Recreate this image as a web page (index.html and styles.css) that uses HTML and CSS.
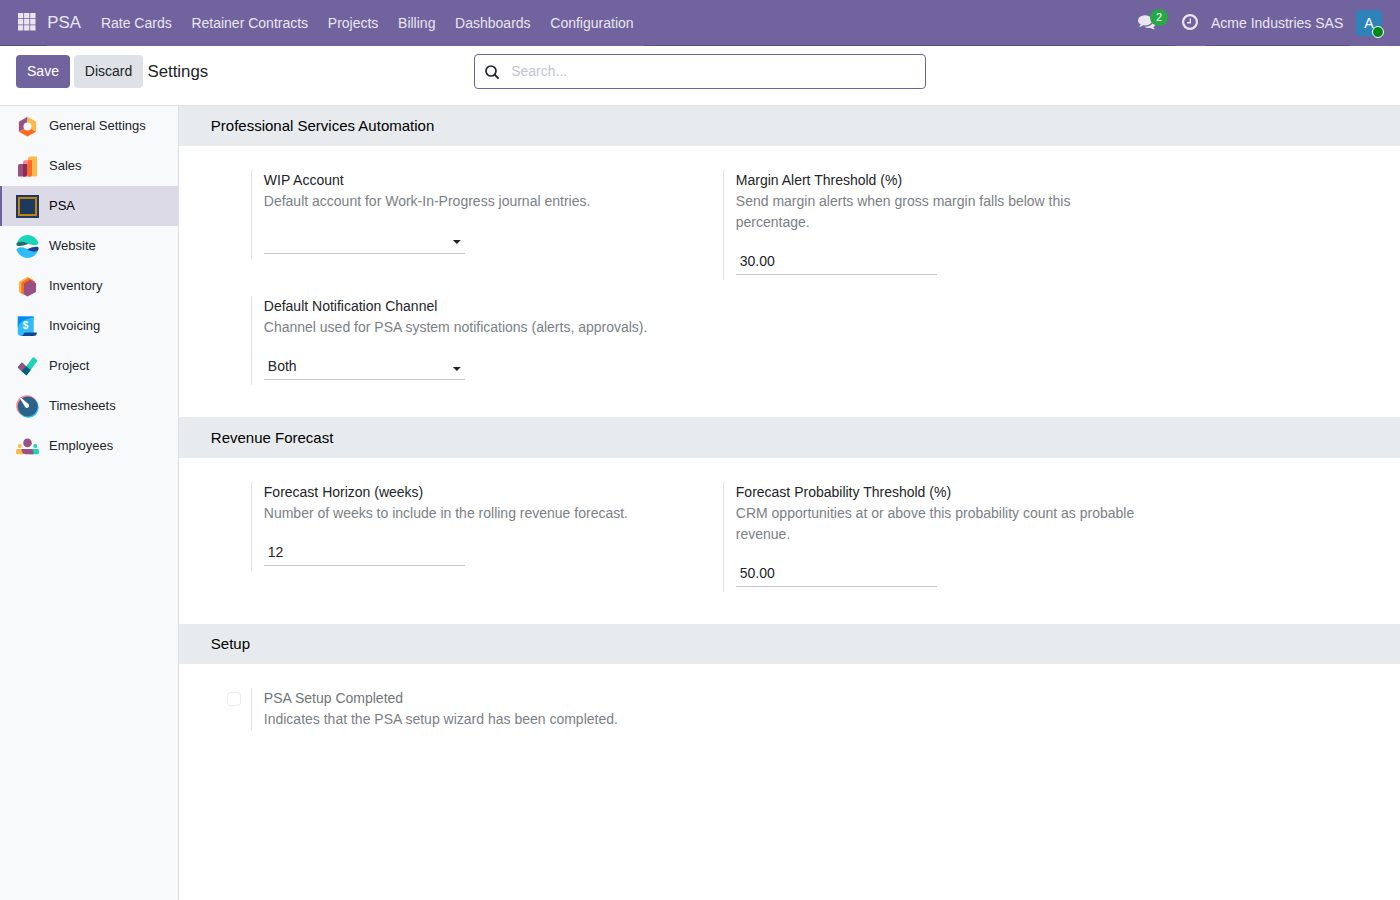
FILE: index.html
```html
<!DOCTYPE html>
<html lang="en">
<head>
<meta charset="utf-8">
<title>Settings</title>
<link rel="stylesheet" href="styles.css">
</head>
<body>
<nav class="navbar">
  <svg class="apps" width="18" height="18" viewBox="0 0 18 18" fill="#e9e6f0"><path d="M0 0h5.300v5.300H0zM6.100 0h5.300v5.300H6.100zM12.200 0h5.300v5.300h-5.300zM0 6.100h5.300v5.300H0zM6.100 6.100h5.300v5.300H6.100zM12.200 6.100h5.300v5.300h-5.300zM0 12.200h5.300v5.300H0zM6.100 12.200h5.300v5.300H6.100zM12.200 12.200h5.300v5.300h-5.300z"/></svg>
  <div class="menu">
    <span class="brand">PSA</span>
    <span>Rate Cards</span><span>Retainer Contracts</span><span>Projects</span><span>Billing</span><span>Dashboards</span><span>Configuration</span>
  </div>
  <div class="chat">
    <svg width="18" height="16" viewBox="0 0 1792 1600" fill="#e9e6f0"><path d="M1408 640q0 139-94 257t-256.500 186.500-353.500 68.500q-86 0-176-16-124 88-278 128-36 9-86 16h-3q-11 0-20.500-8t-11.500-21q-1-3-1-6.500t.5-6.500 2-6l2.500-5 3.500-5.500 4-5 4.500-5 4-4.500q5-6 23-25t26-29.500 22.500-29 25-38.500 20.500-44q-124-72-195-177t-71-224q0-139 94-257t256.500-186.500 353.500-68.500 353.500 68.500 256.500 186.500 94 257zm384 256q0 120-71 224.500t-195 176.500q10 24 20.500 44t25 38.500 22.500 29 26 29.500 23 25q1 1 4 4.500t4.500 5 4 5 3.500 5.500l2.500 5 2 6 .5 6.500-1 6.500q-3 14-13 22t-22 7q-50-7-86-16-154-40-278-128-90 16-176 16-271 0-472-132 58 4 88 4 161 0 309-45t264-129q125-92 192-212t67-254q0-77-23-152 129 71 204 178t75 230z"/></svg>
    <span class="badge">2</span>
  </div>
  <div class="clock">
    <svg width="16" height="16" viewBox="0 0 16 16" fill="none" stroke="#e9e6f0"><circle cx="8" cy="8" r="6.900" stroke-width="2.200"/><path d="M8.300 4.500v4.300H5" stroke-width="1.400"/></svg>
  </div>
  <span class="company">Acme Industries SAS</span>
  <div class="user"><div class="avatar">A<i class="status"></i></div></div>
</nav>
<header class="control">
  <button class="btn save">Save</button>
  <button class="btn discard">Discard</button>
  <span class="title">Settings</span>
  <div class="search">
    <svg width="15" height="15" viewBox="0 0 15 15" fill="none" stroke="#212529"><circle cx="6" cy="6" r="5" stroke-width="1.700"/><path d="M9.600 9.600l4 4" stroke-width="2"/></svg>
    <input type="text" placeholder="Search...">
  </div>
</header>
<div class="body">
  <aside class="sidebar">
    <div class="tab"><svg viewBox="0 0 23 23"><path d="M11.500 1.700L2.900 6.700v10l8.600-5z" fill="#985184"/><path d="M11.500 1.700l8.600 5v10l-8.600-5z" fill="#fbb945"/><path d="M2.900 16.700l8.600-5 8.600 5-8.600 4.900z" fill="#fc6b26"/><circle cx="11.500" cy="11.600" r="4" fill="#f8f9fb"/></svg><span>General Settings</span></div>
    <div class="tab"><svg viewBox="0 0 23 23"><path d="M12 3.500a2 2 0 0 1 2-2h7v19a1 1 0 0 1-1 1h-8z" fill="#fbb945"/><path d="M7 7a2 2 0 0 1 2-1.800h7v14.300a2 2 0 0 1-2 2H7z" fill="#fc868b"/><path d="M12 5.200h4v14.300a2 2 0 0 1-2 2h-2z" fill="#fc6b26"/><path d="M2 10.500A1.500 1.500 0 0 1 3.500 9h7.700v10.500a2 2 0 0 1-2 2H2z" fill="#985184"/><path d="M7 9h4.200v10.500a2 2 0 0 1-2 2H7z" fill="#962b48"/></svg><span>Sales</span></div>
    <div class="tab active"><svg viewBox="0 0 23 23"><path d="M0 0h23v23H0z" fill="#1c3a5f"/><path d="M3 3h17v17H3z" fill="none" stroke="#ba7b13" stroke-width="2"/><path d="M2.700 2.700h17.600v17.600H2.700z" fill="none" stroke="#d58b0c" stroke-width=".6"/></svg><span>PSA</span></div>
    <div class="tab"><svg viewBox="0 0 23 23"><path d="M1 7.500C3 3 6.800 0 11.500 0S21 3.500 22.500 8c-1 2.800-5 2.800-8 1.500C10 7.500 5 5 1 7.500z" fill="#1ad3bb"/><path d="M.3 9.500C.5 6 6 5.200 12.500 8.500 9 10.500 1 12.500.3 9.500z" fill="#1a6f66"/><path d="M.4 14.500c2-3 6-2.700 9.500-1 4.500 2.200 8.600 3.900 12.100 2.500-2 4-5.900 7-10.500 7S2 19.500.4 14.500z" fill="#2ebcfa"/><path d="M11 14.500c3.500-2 11.500-4 11.700-1.500.3 4-5 5-11.700 1.500z" fill="#144496"/></svg><span>Website</span></div>
    <div class="tab"><svg viewBox="0 0 23 23"><path d="M11.500 1.700l6 3.300-10 15-4.600-3V6.700z" fill="#fbb945"/><path d="M12.500 3l6.500 3.600-7 14.400L5.300 18V7.600z" fill="#fc6b26"/><path d="M14.200 5l5.800 3.300v8.800l-8.400 4.500L8 19.500V8.800z" fill="#985184"/><path d="M14.200 5L8 8.800v2.700l8.500-5.200z" fill="#b14a60"/></svg><span>Inventory</span></div>
    <div class="tab"><svg viewBox="0 0 23 23"><path d="M1.800 1.500h15.900v19.300H5a3 3 0 0 1-3.200-3z" fill="#2ebcfa"/><path d="M1.800 1.500h15.900v1.300C9 3.100 3.500 7 1.800 13z" fill="#0788f6"/><path d="M9.500 17.500h11.400c0 2.400-1.500 3.500-3.400 3.500H4.300c3.500 0 3.300-3.500 5.200-3.500z" fill="#144496"/><text x="9.500" y="14.400" class="coin">$</text></svg><span>Invoicing</span></div>
    <div class="tab"><svg viewBox="0 0 23 23"><path d="M5.300 8a1 1 0 0 1 1.400 0l3.600 3.300 6.200-8.500a1.200 1.200 0 0 1 1.700-.2l2.600 2.200a1.200 1.200 0 0 1 .2 1.700L10.500 20.500 2.200 13a1 1 0 0 1 0-1.500z" fill="#1ad3bb"/><path d="M6.700 8l3.900 3.700-4.500 5L2.200 13a1 1 0 0 1 0-1.500L5.200 8a1 1 0 0 1 1.500 0z" fill="#985184"/><path d="M10.300 11.300l4.400 3.700-4.200 5.500-4.900-4.300z" fill="#005e7a"/></svg><span>Project</span></div>
    <div class="tab"><svg viewBox="0 0 23 23"><circle cx="10.900" cy="10.900" r="10.700" fill="#fc868b"/><circle cx="12.400" cy="12.400" r="10.400" fill="#2ebcfa"/><circle cx="11.700" cy="11.500" r="10" fill="#2d6388"/><path d="M4.500 3.300l7.500 6.200a1.600 1.600 0 0 1-2.300 2.300z" fill="#fff" stroke="#fff" stroke-width="1.200" stroke-linejoin="round"/></svg><span>Timesheets</span></div>
    <div class="tab"><svg viewBox="0 0 23 23"><circle cx="11.500" cy="7.900" r="4.300" fill="#985184"/><circle cx="3.800" cy="11.100" r="2" fill="#fbb945"/><circle cx="19.200" cy="11.100" r="2" fill="#1ad3bb"/><path d="M0 15.500A1.500 1.500 0 0 1 1.500 14H8v5.200H1.500A1.500 1.500 0 0 1 0 17.700z" fill="#fbb945"/><path d="M14 14h7.500a1.500 1.500 0 0 1 1.500 1.500v2.200a1.500 1.500 0 0 1-1.500 1.500H14z" fill="#1ad3bb"/><path d="M5.500 14h9c2.500 0 3 2 3 5.200h-8c-2.500 0-4-2-4-5.200z" fill="#985184"/></svg><span>Employees</span></div>
  </aside>
  <main class="content">
    <h2>Professional Services Automation</h2>
    <section class="grid">
      <div class="setting"><div class="box"><label>WIP Account</label><p>Default account for Work-In-Progress journal entries.</p><div class="field"><i class="caret up"></i></div></div></div>
      <div class="setting"><div class="box"><label>Margin Alert Threshold (%)</label><p>Send margin alerts when gross margin falls below this percentage.</p><div class="field">30.00</div></div></div>
      <div class="setting"><div class="box"><label>Default Notification Channel</label><p>Channel used for PSA system notifications (alerts, approvals).</p><div class="field">Both<i class="caret"></i></div></div></div>
    </section>
    <h2>Revenue Forecast</h2>
    <section class="grid">
      <div class="setting"><div class="box"><label>Forecast Horizon (weeks)</label><p>Number of weeks to include in the rolling revenue forecast.</p><div class="field">12</div></div></div>
      <div class="setting"><div class="box"><label>Forecast Probability Threshold (%)</label><p>CRM opportunities at or above this probability count as probable revenue.</p><div class="field">50.00</div></div></div>
    </section>
    <h2>Setup</h2>
    <section class="grid">
      <div class="setting"><span class="check"></span><div class="box flat"><label class="muted">PSA Setup Completed</label><p>Indicates that the PSA setup wizard has been completed.</p></div></div>
    </section>
  </main>
</div>
</body>
</html>
```

FILE: styles.css
```css
* { box-sizing: border-box; }
body {
  margin: 0;
  height: 900px;
  overflow: hidden;
  display: flex;
  flex-direction: column;
  font: 14px/21px "Liberation Sans", Arial, sans-serif;
  color: #212529;
  background: #fff;
}
.navbar {
  height: 46px;
  flex: none;
  display: flex;
  align-items: flex-start;
  background: #71639e;
  border-bottom: 1px solid #5a4f7f;
  color: #e9e6f0;
  line-height: 46px;
}
.apps { margin: 13.200px 11px 0 18px; flex: none; }
.menu { display: flex; height: 46px; width: 597px; padding-left: .3px; background: #71639e; white-space: nowrap; }
.menu span { margin-right: 19.700px; }
.menu .brand { width: 33.600px; font-size: 16.800px; line-height: 44px; padding-top: .500px; margin-right: 20px; }
.chat { position: relative; margin-left: auto; width: 38px; height: 45px; padding-top: 14px; line-height: 0; }
.badge {
  position: absolute;
  left: 12px;
  top: 9px;
  width: 18px;
  height: 17px;
  border-radius: 9px;
  background: #28a745;
  color: #fff;
  font-size: 11px;
  line-height: 17px;
  text-align: center;
}
.clock { width: 29px; height: 46px; padding: 14px 0 0 6px; background: #71639e; line-height: 0; }
.company { width: 145px; padding-left: 6px; white-space: nowrap; }
.user { width: 50px; height: 46px; padding: 10px 0 0 6px; background: #71639e; }
.avatar {
  position: relative;
  width: 26px;
  height: 26px;
  border-radius: 4px;
  background: #2d83b9;
  color: #fff;
  line-height: 27px;
  text-align: center;
}
.status {
  position: absolute;
  left: 16px;
  top: 16px;
  width: 12px;
  height: 12px;
  border: 1px solid #fff;
  border-radius: 50%;
  background: #008818;
}
.control {
  display: flex;
  flex: none;
  height: 60px;
  padding: 8px 16px 0;
  border-bottom: 1px solid #dee2e6;
}
.btn {
  height: 33px;
  margin: 1px 4px 0 0;
  border: 0;
  border-radius: 4px;
  font: 14px/21px "Liberation Sans", Arial, sans-serif;
  padding: 0;
}
.save { width: 54px; background: #71639e; color: #fff; }
.discard { width: 69px; background: #dee2e6; color: #212529; }
.title { width: 327px; font-size: 16.800px; line-height: 35px; padding-left: .5px; }
.search {
  display: flex;
  width: 452px;
  height: 35px;
  padding: 10px 10px 0;
  border: 1px solid #71639e;
  border-radius: 4px;
}
.search input {
  flex: 1;
  height: 21px;
  margin: -4px 0 0 11.200px;
  padding: 0;
  border: 0;
  outline: 0;
  font: 14px/21px "Liberation Sans", Arial, sans-serif;
}
.search input::placeholder { color: #c0c5cb; }
.body { display: flex; flex: 1; min-height: 0; }
.sidebar { width: 178.800px; flex: none; border-right: 1px solid #dcdfe4; background: #f8f9fb; font-size: 13px; }
.tab { display: flex; height: 40px; padding-left: 16px; line-height: 39px; }
.tab svg { width: 23px; height: 23px; margin: 9px 10px 0 0; }
.tab.active { background: #dddae7; color: #000; border-left: 2px solid #71639e; padding-left: 14px; }
.coin { font-size: 10px; font-weight: bold; fill: #fff; text-anchor: middle; }
.content { flex: 1; }
h2 {
  height: 40.300px;
  margin: 0;
  padding: .3px 0 0 32px;
  background: #e7ebee;
  color: #000;
  font-size: 15px;
  font-weight: 400;
  line-height: 40px;
}
.grid {
  display: grid;
  grid-template-columns: 472px 472px;
  row-gap: 16px;
  padding: 24px 0 32px 32px;
}
.setting { position: relative; padding: 0 16px 0 40px; }
.box { border-left: 1px solid #dee2e6; padding: 0 0 5px 12px; }
.box.flat { padding-bottom: 0; }
label { display: block; }
.muted { color: #717679; }
p { margin: 0; color: #7b8085; }
.field {
  display: flex;
  justify-content: space-between;
  width: 201px;
  height: 26px;
  margin-top: 16px;
  padding: 2px 4px;
  border-bottom: 1px solid #c4c7ca;
}
.caret {
  width: 8px;
  height: 4px;
  margin-top: 10.700px;
  background: #212529;
  clip-path: polygon(0 0, 100% 0, 50% 100%);
}
.caret.up { margin: 9.700px 0 0 auto; }
.check {
  position: absolute;
  left: 16px;
  top: 4px;
  width: 14px;
  height: 14px;
  border: 1px solid #ebebec;
  border-radius: 3.500px;
}
```
